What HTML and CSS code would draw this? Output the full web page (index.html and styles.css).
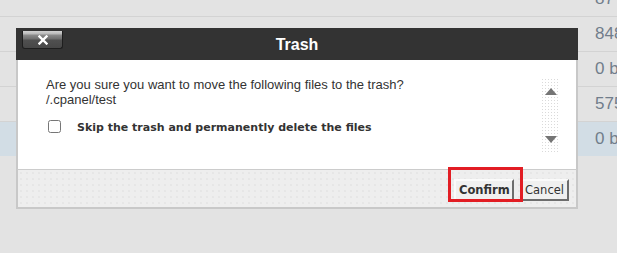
FILE: index.html
```html
<!DOCTYPE html>
<html>
<head>
<meta charset="utf-8">
<link rel="stylesheet" href="styles.css">
</head>
<body>
<div class="table">
  <div class="row"><span class="spacer"></span><span class="size">87</span></div>
  <div class="row"><span class="spacer"></span><span class="size">848</span></div>
  <div class="row"><span class="spacer"></span><span class="size">0 b</span></div>
  <div class="row"><span class="spacer"></span><span class="size">575</span></div>
  <div class="row selected"><span class="spacer"></span><span class="size">0 b</span></div>
</div>

<div class="dialog">
  <div class="dialog-header">
    <button class="close-btn" aria-label="close">
      <svg width="10" height="10" viewBox="0 0 10 10"><path d="M1.5 1.5 L8.5 8.5 M8.5 1.5 L1.5 8.5" stroke="#fff" stroke-width="2.4" stroke-linecap="square"/></svg>
    </button>
    <span class="title">Trash</span>
  </div>
  <div class="dialog-body">
    <div class="message">
      <div class="line">Are you sure you want to move the following files to the trash?</div>
      <div class="line">/.cpanel/test</div>
      <label class="skip"><input type="checkbox"><span>Skip the trash and permanently delete the files</span></label>
    </div>
    <div class="scroller">
      <span class="arrow up"></span>
      <span class="arrow down"></span>
    </div>
  </div>
  <div class="dialog-footer">
    <button class="btn primary">Confirm</button>
    <button class="btn">Cancel</button>
  </div>
  <div class="highlight"></div>
</div>
</body>
</html>
```

FILE: styles.css
```css
html, body {
  margin: 0;
  padding: 0;
  background: #e3e3e3;
  width: 617px;
  height: 253px;
  overflow: hidden;
  position: relative;
}

.table {
  margin-top: -18px;
  display: flex;
  flex-direction: column;
}

.row {
  display: grid;
  grid-template-columns: 595px 1fr;
  height: 34px;
  border-bottom: 1px solid #d3d3d3;
  align-items: center;
  font-family: "Liberation Sans", Arial, sans-serif;
  font-size: 17px;
  color: #717d8b;
}

.row.selected {
  background: #d2dde5;
  border-bottom: none;
}

.size {
  white-space: nowrap;
  overflow: hidden;
}

.dialog {
  position: absolute;
  left: 16px;
  top: 28px;
  width: 562px;
  display: flex;
  flex-direction: column;
  font-family: "Liberation Sans", Arial, sans-serif;
}

.dialog-header {
  position: relative;
  height: 32px;
  background: #333333;
  display: flex;
  align-items: center;
  justify-content: center;
}

.title {
  color: #fff;
  font-weight: bold;
  font-size: 16px;
  margin-top: 1px;
}

.close-btn {
  position: absolute;
  left: 6px;
  top: 3px;
  width: 41px;
  height: 18px;
  padding: 0;
  border: 1px solid #1e1e1e;
  border-top: none;
  border-radius: 0 0 3px 3px;
  background: linear-gradient(to bottom, #d2d2d2 0, #b9b9b9 3px, #8c8c8c 4px, #6e6e6e 8px, #505050 9px, #474747 100%);
  display: flex;
  align-items: center;
  justify-content: center;
}

.close-btn svg {
  display: block;
  margin-top: 1px;
}

.dialog-body {
  height: 109px;
  background: #fff;
  border-left: 2px solid #c8c8c8;
  border-right: 2px solid #c8c8c8;
  display: flex;
  justify-content: space-between;
}

.message {
  padding: 17px 0 0 28px;
  font-size: 13px;
  color: #333;
  line-height: 15px;
}

.skip {
  display: flex;
  align-items: center;
  margin-top: 11px;
  padding-left: 2px;
  font-family: "DejaVu Sans", Verdana, sans-serif;
  font-weight: bold;
  font-size: 11px;
  color: #333;
}

.skip span {
  margin-top: 2px;
}

.skip input {
  width: 13px;
  height: 13px;
  margin: 0 16px 0 0;
}

.scroller {
  width: 19px;
  height: 74px;
  margin: 18px 16px 0 0;
  background-color: #fff;
  background-image: radial-gradient(circle, #dadada 0.6px, transparent 0.9px);
  background-size: 3px 3px;
  display: flex;
  flex-direction: column;
  justify-content: space-between;
  align-items: center;
  padding: 10px 0 9px;
  box-sizing: border-box;
}

.arrow {
  width: 0;
  height: 0;
  border-left: 6px solid transparent;
  border-right: 6px solid transparent;
}

.arrow.up {
  border-bottom: 7px solid #757575;
}

.arrow.down {
  border-top: 7px solid #757575;
}

.dialog-footer {
  height: 37px;
  background-color: #eeeeee;
  background-image: radial-gradient(circle, #e2e2e2 0.6px, transparent 0.9px);
  background-size: 6px 6px;
  border: 2px solid #c8c8c8;
  border-top: 1px solid #cccccc;
  display: flex;
  justify-content: flex-end;
  align-items: center;
  gap: 6px;
  padding-right: 7px;
}

.btn {
  height: 22px;
  padding: 0 3px;
  font-family: "DejaVu Sans", Verdana, sans-serif;
  font-size: 11.5px;
  color: #333;
  background: #f0f0f0;
  border: 2px solid;
  border-color: #fafafa #6d6d6d #6d6d6d #fafafa;
  margin-top: 3px;
}

.btn.primary {
  font-weight: bold;
  width: 60px;
}

.highlight {
  position: absolute;
  left: 432px;
  top: 139px;
  width: 69px;
  height: 29px;
  border: 3px solid #e21d24;
}
```
